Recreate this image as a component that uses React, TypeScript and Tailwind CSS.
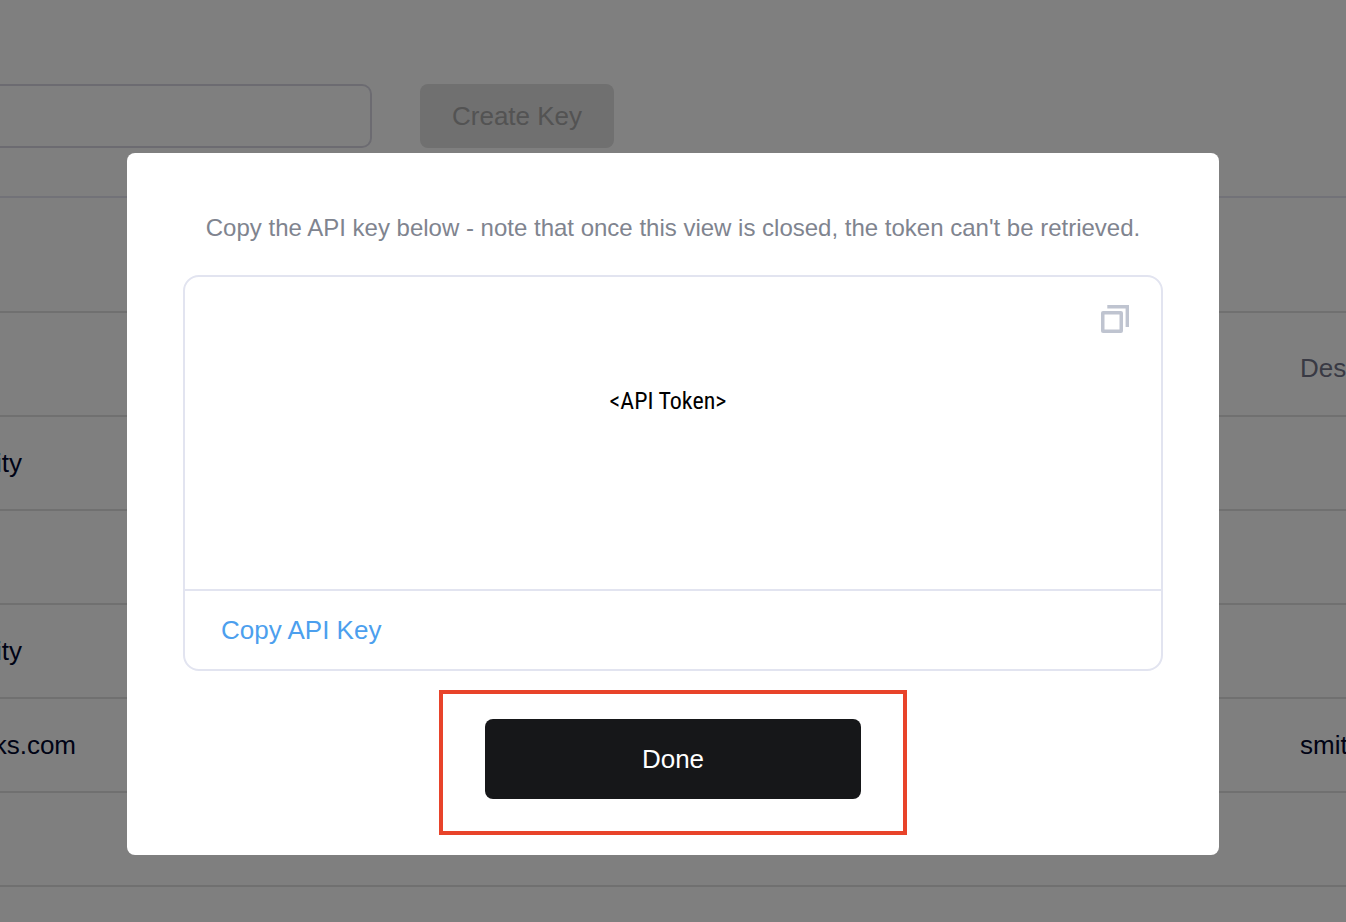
type Row = { name: string; description: string };

const rows: Row[] = [
  { name: "ity", description: "" },
  { name: "", description: "" },
  { name: "ity", description: "" },
  { name: "ks.com", description: "smit" },
  { name: "", description: "" },
];

function KeysPage() {
  return (
    <main className="h-screen overflow-hidden bg-white pt-21">
      <form className="flex h-16 gap-12">
        <input
          aria-label="Key name"
          className="h-16 w-[372px] rounded-r-[10px] border-y-2 border-r-2 border-[#d8d7e3] px-4 text-[26px] outline-none"
        />
        <button
          type="button"
          disabled
          className="h-16 rounded-lg bg-[#e0e0e0] px-8 text-[26px] text-[#a6a6a6]"
        >
          Create Key
        </button>
      </form>

      <section className="mt-12 h-[117px] border-y-2 border-t-[#e5e4f0] border-b-[#e0e0e0]" />

      <table className="w-full table-fixed border-collapse text-left text-[26px] leading-8">
        <thead>
          <tr className="h-[103px] border-b-2 border-[#e0e0e0] text-[#727589]">
            <th className="p-0 font-normal" />
            <th className="w-[46px] p-0 pt-2 font-normal">Des</th>
          </tr>
        </thead>
        <tbody className="text-[#00062c]">
          {rows.map((row, i) => (
            <tr key={i} className="h-[94px] border-b-2 border-[#e0e0e0]">
              <td className="p-0">
                <div
                  className={
                    row.name === "ity"
                      ? "flex w-[22px] justify-end"
                      : "flex w-[76px] justify-end"
                  }
                >
                  {row.name}
                </div>
              </td>
              <td className="overflow-hidden p-0">{row.description}</td>
            </tr>
          ))}
        </tbody>
      </table>
    </main>
  );
}

function CopyIcon() {
  return (
    <svg width="28" height="28" viewBox="0 0 28 28" fill="none" stroke="#bfc4d0">
      <path d="M6.3 1.7H26.3V22" strokeWidth="3.4" />
      <rect x="1.75" y="7.75" width="18.5" height="18.5" rx="0.3" strokeWidth="3.5" />
    </svg>
  );
}

function TokenDialog() {
  return (
    <div className="fixed inset-0 flex items-start justify-center bg-black/50 pt-[153px]">
      <div
        role="dialog"
        aria-modal="true"
        aria-describedby="token-note"
        className="flex w-full max-w-[1092px] flex-col items-center rounded-lg bg-white px-14 pt-[59px] pb-5"
      >
        <p id="token-note" className="text-center text-2xl text-[#80848f]">
          Copy the API key below - note that once this view is closed, the token can't be retrieved.
        </p>

        <div className="mt-[31px] w-full rounded-2xl border-2 border-[#e2e4f0]">
          <div className="relative flex h-[312px] justify-center pt-[108px]">
            <code className="pr-[10px] font-['Roboto_Condensed','Roboto',sans-serif] text-2xl text-black">
              &lt;API Token&gt;
            </code>
            <button type="button" aria-label="Copy" className="absolute top-7 right-8">
              <CopyIcon />
            </button>
          </div>
          <div className="flex h-20 items-center border-t-2 border-[#e2e4f0] px-9">
            <button type="button" className="text-[26px] text-[#4c9fee]">
              Copy API Key
            </button>
          </div>
        </div>

        <div className="mt-[19px] border-4 border-[#e8432a] px-[42px] pt-[25px] pb-8">
          <button
            type="button"
            className="block h-20 w-[376px] rounded-lg bg-[#161719] text-[26px] text-white"
          >
            Done
          </button>
        </div>
      </div>
    </div>
  );
}

export default function App() {
  return (
    <div className="font-['Liberation_Sans',Arial,sans-serif]">
      <KeysPage />
      <TokenDialog />
    </div>
  );
}
